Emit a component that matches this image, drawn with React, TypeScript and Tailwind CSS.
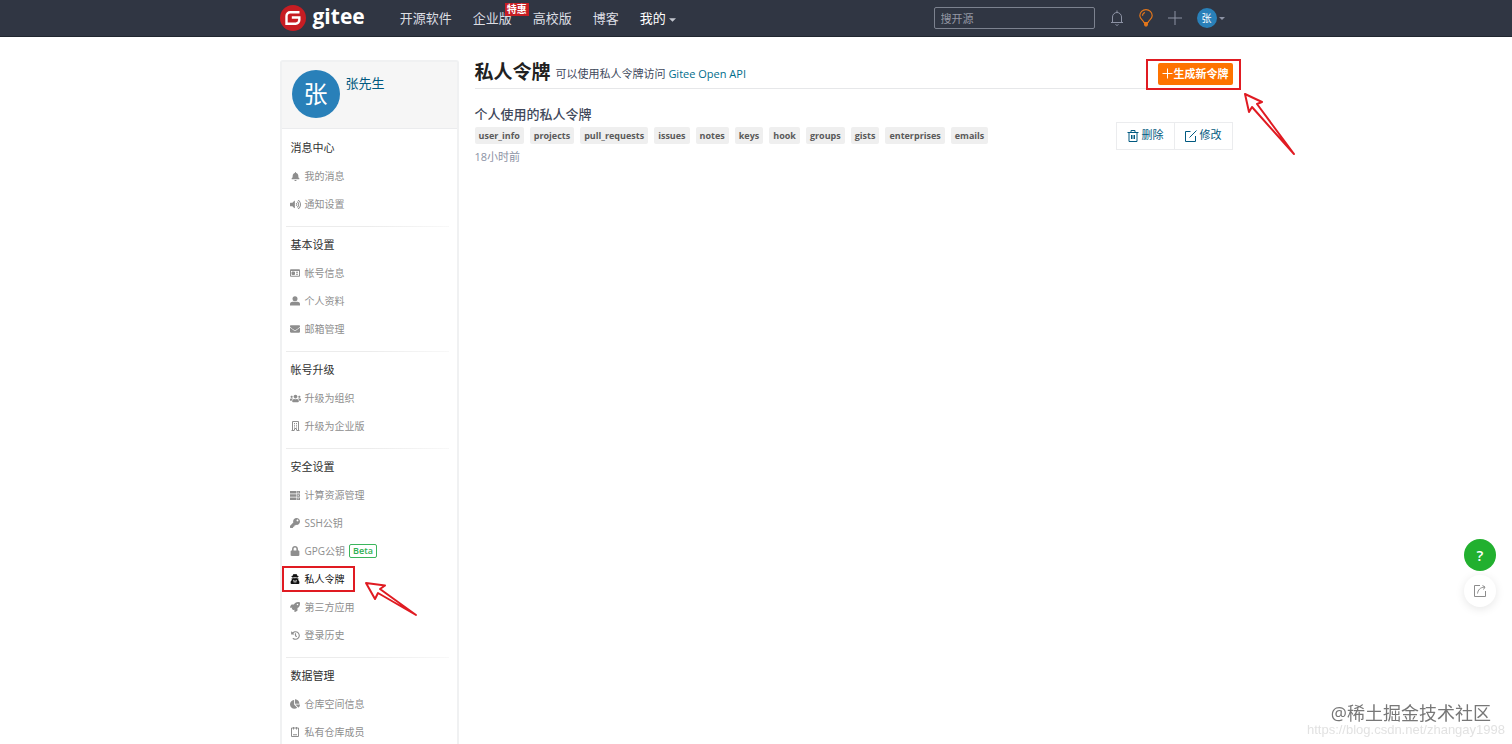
import type { ReactNode } from "react";
import { FaBell, FaVolumeUp, FaEnvelope, FaUsers, FaKey, FaLock, FaUserSecret, FaRocket, FaHistory, FaChartPie } from "react-icons/fa";
import { clsx } from "clsx";

interface MenuItem {
  label: string;
  icon: ReactNode;
  active?: boolean;
  beta?: boolean;
}

interface MenuSection {
  title: string;
  items: MenuItem[];
}

const IdCardIcon = () => (
  <svg viewBox="0 0 20 16" className="h-2 w-[10px]" fill="none" stroke="currentColor" strokeWidth="2">
    <path d="M1 1.500h18v13H1zM1 3h18" />
    <path d="M4 6h5v5H4z" fill="currentColor" />
    <path d="M12 6.500h4M12 10.500h4" />
  </svg>
);

const PersonIcon = () => (
  <svg viewBox="0 0 20 20" className="size-[10px]" fill="currentColor">
    <circle cx="10" cy="5.5" r="5" />
    <path d="M0 19v-3c0-3 3-4.500 5-4.500h10c2 0 5 1.500 5 4.500v3z" />
  </svg>
);

const BuildingIcon = () => (
  <svg viewBox="0 0 18 20" className="h-[10px] w-[9px]" fill="none" stroke="currentColor" strokeWidth="2">
    <path d="M3 19V1h12v18M1 19h5M12 19h5M7 19v-4h4v4" />
    <path d="M6 5h2M10 5h2M6 8.500h2M10 8.500h2M6 12h2M10 12h2" />
  </svg>
);

const ServerIcon = () => (
  <svg viewBox="0 0 20 18" className="h-[9px] w-[10px]" fill="currentColor">
    <path d="M0 0h12v5H0zM13 0h7v5h-7zM0 6.500h12v5H0zM13 6.500h7v5h-7zM0 13h12v5H0zM13 13h7v5h-7z" />
    <path d="M15 2.500h3M15 9h3M15 15.500h3" stroke="#fff" strokeWidth="1.200" />
  </svg>
);

const BadgeIcon = () => (
  <svg viewBox="0 0 16 20" className="h-[10px] w-2" fill="none" stroke="currentColor" strokeWidth="2">
    <path d="M1 2h14v17H1z" />
    <path d="M4 0h2v5H4zM10 0h2v5h-2z" fill="currentColor" stroke="none" />
    <path d="M4 15.500h8" />
  </svg>
);

const sections: MenuSection[] = [
  {
    title: "消息中心",
    items: [
      { label: "我的消息", icon: <FaBell className="size-[9px]" /> },
      { label: "通知设置", icon: <FaVolumeUp className="size-[11px]" /> },
    ],
  },
  {
    title: "基本设置",
    items: [
      { label: "帐号信息", icon: <IdCardIcon /> },
      { label: "个人资料", icon: <PersonIcon /> },
      { label: "邮箱管理", icon: <FaEnvelope className="size-[10px]" /> },
    ],
  },
  {
    title: "帐号升级",
    items: [
      { label: "升级为组织", icon: <FaUsers className="size-[11px]" /> },
      { label: "升级为企业版", icon: <BuildingIcon /> },
    ],
  },
  {
    title: "安全设置",
    items: [
      { label: "计算资源管理", icon: <ServerIcon /> },
      { label: "SSH公钥", icon: <FaKey className="size-[10px]" /> },
      { label: "GPG公钥", icon: <FaLock className="size-[10px]" />, beta: true },
      { label: "私人令牌", icon: <FaUserSecret className="size-[10px]" />, active: true },
      { label: "第三方应用", icon: <FaRocket className="size-[10px]" /> },
      { label: "登录历史", icon: <FaHistory className="size-[9px]" /> },
    ],
  },
  {
    title: "数据管理",
    items: [
      { label: "仓库空间信息", icon: <FaChartPie className="size-[10px]" /> },
      { label: "私有仓库成员", icon: <BadgeIcon /> },
    ],
  },
];

const scopes = [
  "user_info",
  "projects",
  "pull_requests",
  "issues",
  "notes",
  "keys",
  "hook",
  "groups",
  "gists",
  "enterprises",
  "emails",
];

function Caret({ className }: { className?: string }) {
  return (
    <svg viewBox="0 0 8 4" className={className} fill="currentColor">
      <path d="M0 0h8L4 4z" />
    </svg>
  );
}

function Header() {
  return (
    <header className="h-[37px] border-b border-[#20262f] bg-[#303643]">
      <div className="mx-auto flex h-full max-w-[953px] items-center pr-2">
        <a href="#" className="flex items-center gap-[7px] text-white">
          <svg viewBox="0 0 26 26" className="size-[26px]">
            <circle cx="13" cy="13" r="13" fill="#c71d23" />
            <path
              d="M19.500 7.300H10.200a3.700 3.700 0 0 0-3.700 3.700v7.700h9.200a3.600 3.600 0 0 0 3.600-3.600v-2.600h-7.500"
              fill="none"
              stroke="#fff"
              strokeWidth="2.400"
            />
          </svg>
          <span className="mb-1 text-[21px] leading-6 font-bold">gitee</span>
        </a>
        <nav className="mt-px ml-[35px] flex items-center gap-[21px] text-[13px] text-[#dcdee3]">
          <a href="#">开源软件</a>
          <a href="#" className="relative">
            企业版
            <span className="absolute -top-[6px] left-8 bg-[#c71d23] px-[2px] text-[10px] leading-[13px] font-bold whitespace-nowrap text-white">
              特惠
            </span>
          </a>
          <a href="#">高校版</a>
          <a href="#">博客</a>
          <a href="#" className="flex items-center gap-[3px] text-white">
            我的
            <Caret className="mt-[3px] h-1 w-[7px] text-[#c3c7cf]" />
          </a>
        </nav>
        <div className="ml-auto flex items-center gap-[15px] text-[#8c92a4]">
          <input
            type="text"
            aria-label="搜开源"
            placeholder="搜开源"
            className="h-[22px] w-[161px] rounded-[2px] border border-[#7c828f] bg-transparent px-[6px] text-[11px] text-white outline-none placeholder:text-[#9498a3]"
          />
          <button aria-label="通知">
            <svg viewBox="0 0 14 16" className="h-4 w-[14px]" fill="none" stroke="currentColor">
              <path d="M1 12.500h12M2.500 12.500V7a4.500 4.500 0 0 1 9 0v5.500M7 2.500V.5M5.500 14.500c.6 1 2.400 1 3 0" />
            </svg>
          </button>
          <button aria-label="提示" className="text-[#e2761b]">
            <svg viewBox="0 0 14 18" className="h-[18px] w-[14px]" fill="none" stroke="currentColor" strokeWidth="1.200">
              <path d="M5 13.500C4.500 11.500.8 10 .8 6.800a6.200 6.200 0 0 1 12.400 0c0 3.200-3.700 4.700-4.200 6.700z" />
              <path d="M3.500 6.800A3.500 3.500 0 0 1 6 3.500" />
              <path d="M5 13.500h4v2.500l-1 1.500H6L5 16z" fill="currentColor" stroke="none" />
            </svg>
          </button>
          <button aria-label="新建">
            <svg viewBox="0 0 14 14" className="size-[14px]" fill="none" stroke="currentColor">
              <path d="M7 0v14M0 7h14" />
            </svg>
          </button>
          <button aria-label="账户" className="flex items-center gap-[2px]">
            <span className="flex size-5 items-center justify-center rounded-full bg-[#2980b9] text-[10px] text-white">张</span>
            <Caret className="h-[3px] w-[6px]" />
          </button>
        </div>
      </div>
    </header>
  );
}

function Sidebar() {
  return (
    <aside className="w-[179px] shrink-0 rounded-t-[3px] border-x-2 border-t-2 border-[#f0f1f2]">
      <div className="flex h-[67px] gap-[6px] border-b border-[#ebecee] bg-[#f6f6f6] pt-2 pl-[10px]">
        <div className="flex size-12 items-center justify-center rounded-full bg-[#2980b9] text-2xl text-white">张</div>
        <a href="#" className="mt-[3px] text-[13px] leading-5 text-[#005980]">
          张先生
        </a>
      </div>
      {sections.map((section, i) => (
        <section key={section.title} className="pb-2">
          <div className={clsx("mr-2 ml-1 h-px", i > 0 && "bg-linear-to-r from-[#ececec] via-[#ececec] to-[#f8f8f8]")} />
          <h2 className="mt-2 mb-1 pl-[9px] text-[11px] leading-5 text-[#303030]">{section.title}</h2>
          <ul>
            {section.items.map((item) => (
              <li key={item.label} className="relative">
                <a
                  href="#"
                  className={clsx(
                    "flex h-7 items-center pl-2 text-[10px]",
                    item.active ? "text-[#111111]" : "text-[#8e8e8e]"
                  )}
                >
                  <span className="mr-1 flex w-[11px] justify-center">{item.icon}</span>
                  {item.label}
                  {item.beta && (
                    <span className="ml-1 rounded-[2px] border border-[#3bb55c] px-[3px] text-[9px] leading-3 font-semibold text-[#2fb052]">
                      Beta
                    </span>
                  )}
                </a>
                {item.active && (
                  <>
                    <span className="absolute inset-y-px left-0 w-[73px] border-2 border-[#e01b22]" />
                    <svg viewBox="0 0 54 36" className="absolute top-4 left-[82px] h-9 w-[54px]" fill="none" stroke="#e01b22" strokeWidth="2" strokeLinejoin="round">
                      <path d="M2 2l19 2.500-5 3.500 36 26L14 12l-3 6z" />
                    </svg>
                  </>
                )}
              </li>
            ))}
          </ul>
        </section>
      ))}
    </aside>
  );
}

function Tokens() {
  return (
    <main className="min-w-0 flex-1">
      <div className="flex h-[29px] items-start border-b border-[#e6e7e9]">
        <h1 className="text-[19px] leading-6 font-bold text-[#212121]">私人令牌</h1>
        <p className="ml-[5px] pt-1 text-[11px] leading-5 text-[#40485b]">
          可以使用私人令牌访问{" "}
          <a href="#" className="text-[#006d8c]">
            Gitee Open API
          </a>
        </p>
        <div className="relative mt-[3px] ml-auto">
          <button className="flex h-[22px] items-center rounded-[2px] bg-[#fe7300] px-1 text-[11px] font-bold text-white">
            <svg viewBox="0 0 12 12" className="size-3" fill="none" stroke="currentColor">
              <path d="M5.500 .5v10M.5 5.500h10" />
            </svg>
            生成新令牌
          </button>
          <span className="pointer-events-none absolute -top-1 -right-2 -bottom-[5px] -left-3 border-2 border-[#e01b22]" />
          <svg viewBox="0 0 52 64" className="absolute top-[29px] left-[86px] h-16 w-[52px]" fill="none" stroke="#e01b22" strokeWidth="2" strokeLinejoin="round">
            <path d="M1 2l17 8-5 2 37 50L8 15l-3 5z" />
          </svg>
        </div>
      </div>
      <div className="mt-[15px] flex items-center">
        <div className="min-w-0 flex-1">
          <h3 className="text-[13px] leading-5 font-medium text-[#40485b]">个人使用的私人令牌</h3>
          <ul className="mt-[3px] flex flex-wrap gap-[6px]">
            {scopes.map((scope) => (
              <li key={scope} className="rounded-[2px] bg-[#efefef] px-1 text-[9px] leading-[17px] font-bold text-[#5a5a5a]">
                {scope}
              </li>
            ))}
          </ul>
          <p className="mt-[3px] text-[11px] leading-5 text-[#8c92a4]">18小时前</p>
        </div>
        <div className="flex h-7 divide-x divide-[#ebecee] border border-[#ebecee] text-[11px] text-[#005980]">
          <button className="flex items-center gap-[3px] px-[10px]">
            <svg viewBox="0 0 12 12" className="size-3" fill="none" stroke="currentColor">
              <path d="M.5 2.500h11M4 2.500v-2h4v2M2 2.500v9h8v-9M4.500 5v4M6 5v4M7.500 5v4" />
            </svg>
            删除
          </button>
          <button className="flex items-center gap-[3px] px-[10px]">
            <svg viewBox="0 0 12 12" className="size-3" fill="none" stroke="currentColor">
              <path d="M5.500 1.500h-5v10h10V6M4.500 7.500l7-7" />
            </svg>
            修改
          </button>
        </div>
      </div>
    </main>
  );
}

export default function App() {
  return (
    <div className="h-screen overflow-hidden bg-white font-['Open_Sans','Noto_Sans_CJK_SC',sans-serif]">
      <Header />
      <div className="mx-auto mt-[23px] flex max-w-[953px] gap-4">
        <Sidebar />
        <Tokens />
      </div>

      {/* Floating help */}
      <div className="fixed right-4 bottom-[137px] flex flex-col gap-1">
        <button className="size-8 rounded-full bg-[#22b02f] text-[15px] font-semibold text-white">?</button>
        <button aria-label="反馈" className="flex size-8 items-center justify-center rounded-full bg-white text-[#8c8c8c] shadow-[0_2px_10px_rgba(0,0,0,0.1)]">
          <svg viewBox="0 0 12 12" className="size-3" fill="none" stroke="currentColor">
            <path d="M6 .5H.5v11h11V6M3.500 8.500C4 5 6 2.500 10.500 2M8.500.5l2.500 1.500-1.500 2.500" />
          </svg>
        </button>
      </div>

      {/* Watermark */}
      <div className="pointer-events-none fixed right-[7px] bottom-[7px] flex flex-col items-end whitespace-nowrap">
        <span className="mr-[14px] text-lg leading-5 text-[#777777]">@稀土掘金技术社区</span>
        <span className="font-['Liberation_Sans',sans-serif] text-[13px] leading-[14px] text-[#e2e2e2]">
          https://blog.csdn.net/zhangay1998
        </span>
      </div>
    </div>
  );
}
